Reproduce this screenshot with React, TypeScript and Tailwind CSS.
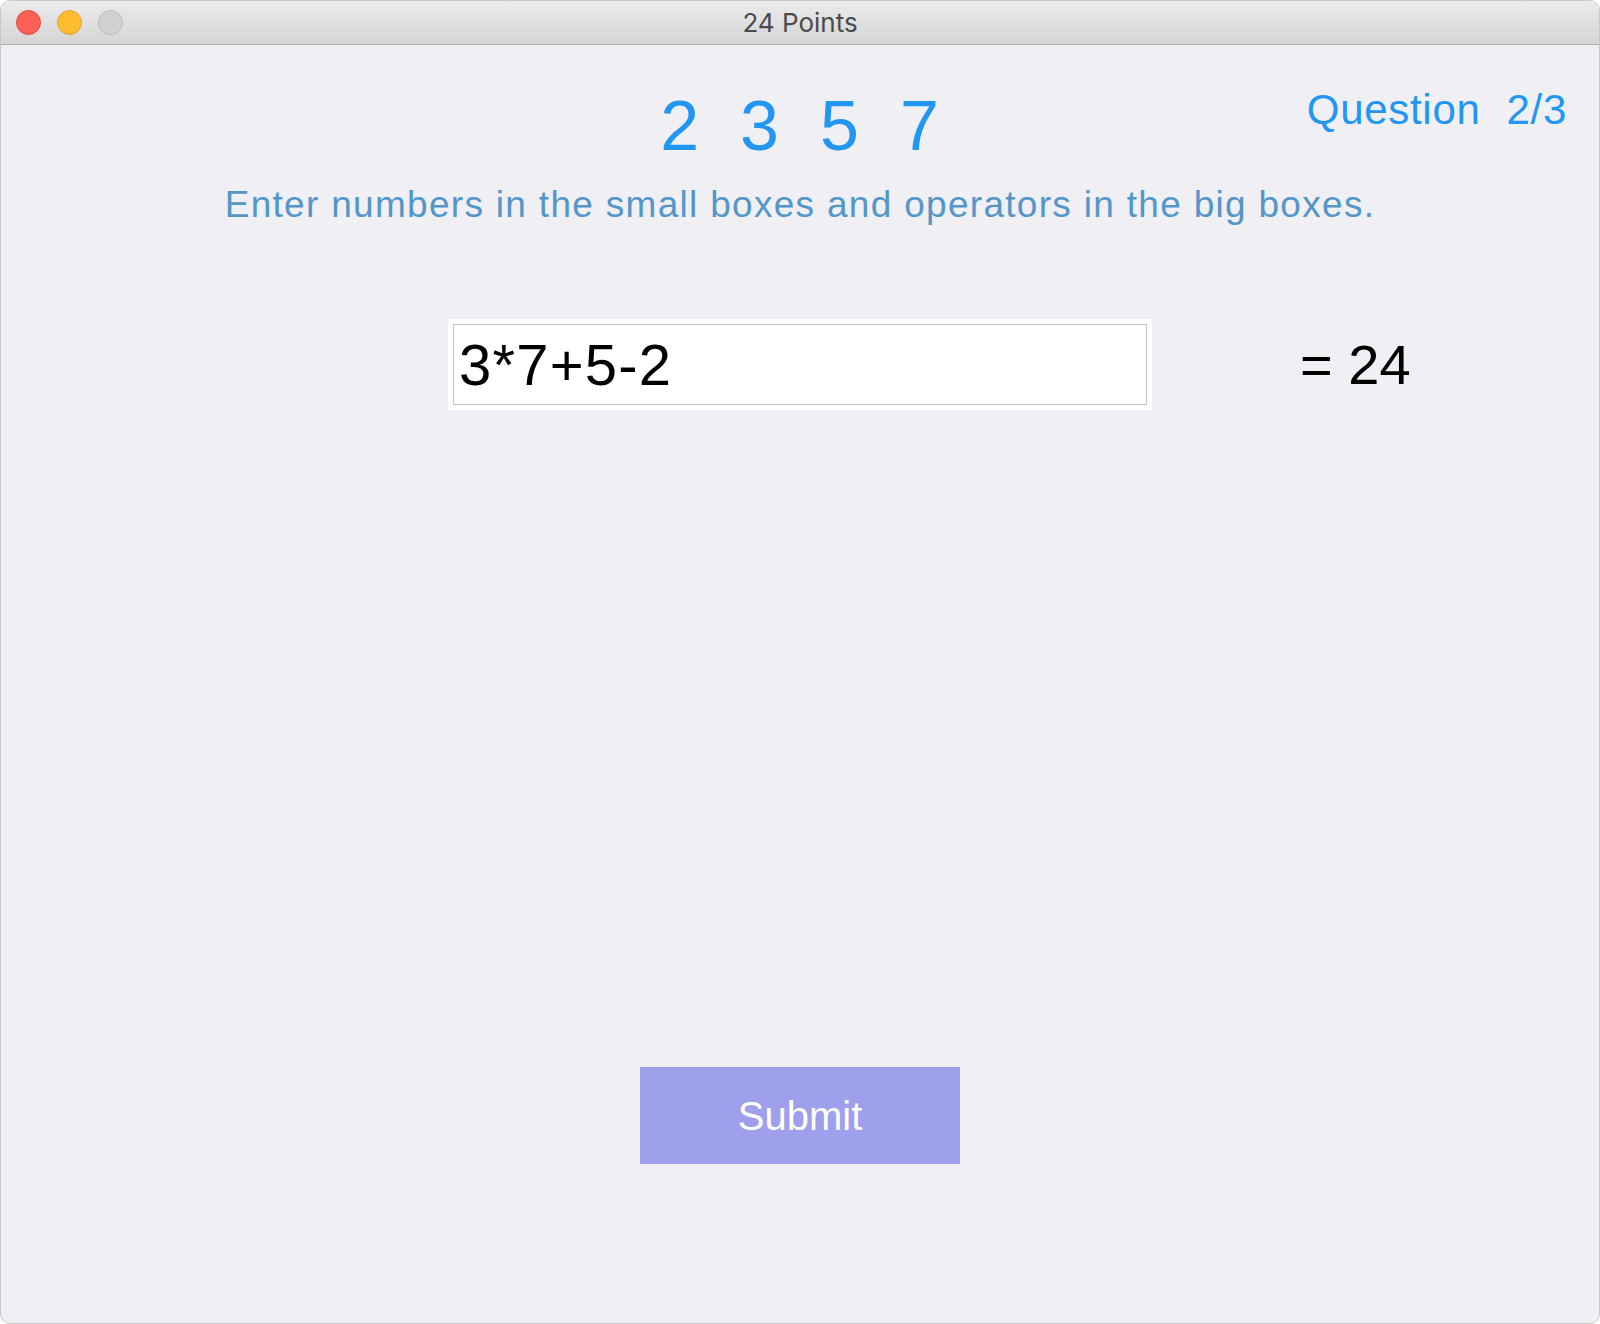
import React from "react";

export default function App() {
  const nums = ["2", "3", "5", "7"];
  return (
    <div className="w-[1600px] h-[1324px] bg-white">
      <div className="w-full h-full rounded-[10px] overflow-hidden bg-[#efeff4] flex flex-col border border-[#c8c8c8]" style={{ fontFamily: '"Liberation Sans", Arial, sans-serif' }}>
        {/* Title bar */}
        <div className="relative h-[44px] shrink-0 border-b border-[#b1b1b1] bg-gradient-to-b from-[#ebebeb] to-[#d5d5d5] flex items-center justify-center">
          <div className="absolute left-[15px] top-[9px] flex gap-[16px]">
            <div className="w-[25px] h-[25px] rounded-full bg-[#fe5f57] border border-[#e2463f]" />
            <div className="w-[25px] h-[25px] rounded-full bg-[#febc2e] border border-[#dea236]" />
            <div className="w-[25px] h-[25px] rounded-full bg-[#d1d1d1] border border-[#bcbcbc]" />
          </div>
          <span className="text-[26px] leading-none text-[#4b4b4b]" style={{ fontFamily: 'Inter, "Open Sans", sans-serif' }}>24 Points</span>
        </div>

        {/* Content */}
        <div className="flex flex-col items-center flex-1">
          <div className="w-full grid grid-cols-[1fr_auto_1fr] pt-[44px]">
            <div />
            <div className="flex gap-[41px] text-[70px] leading-none text-[#2196f3] mt-[2px] ml-[-1px]">
              {nums.map((n) => (
                <span key={n}>{n}</span>
              ))}
            </div>
            <div className="flex justify-end pr-[32px]">
              <div className="flex gap-[26px] text-[42px] leading-none text-[#2196f3] tracking-[0.7px]">
                <span>Question</span>
                <span>2/3</span>
              </div>
            </div>
          </div>

          <div className="mt-[25px] text-[37px] leading-none text-[#5596c8] tracking-[1.3px]">
            Enter numbers in the small boxes and operators in the big boxes.
          </div>

          <div className="w-full grid grid-cols-[1fr_704px_1fr] items-center mt-[96px]">
            <div />
            <div className="bg-white p-[5px]">
              <div className="h-[81px] border border-[#c3c3c3] bg-white flex items-center pl-[5px] text-[58px] leading-none text-black tracking-[1.2px]">
                3*7+5-2
              </div>
            </div>
            <div className="pl-[148px] text-[56px] leading-none text-black">= 24</div>
          </div>

          <button className="mt-[657px] w-[320px] h-[97px] bg-[#9fa0ec] text-white text-[40px] leading-none flex items-center justify-center">
            Submit
          </button>
        </div>
      </div>
    </div>
  );
}
